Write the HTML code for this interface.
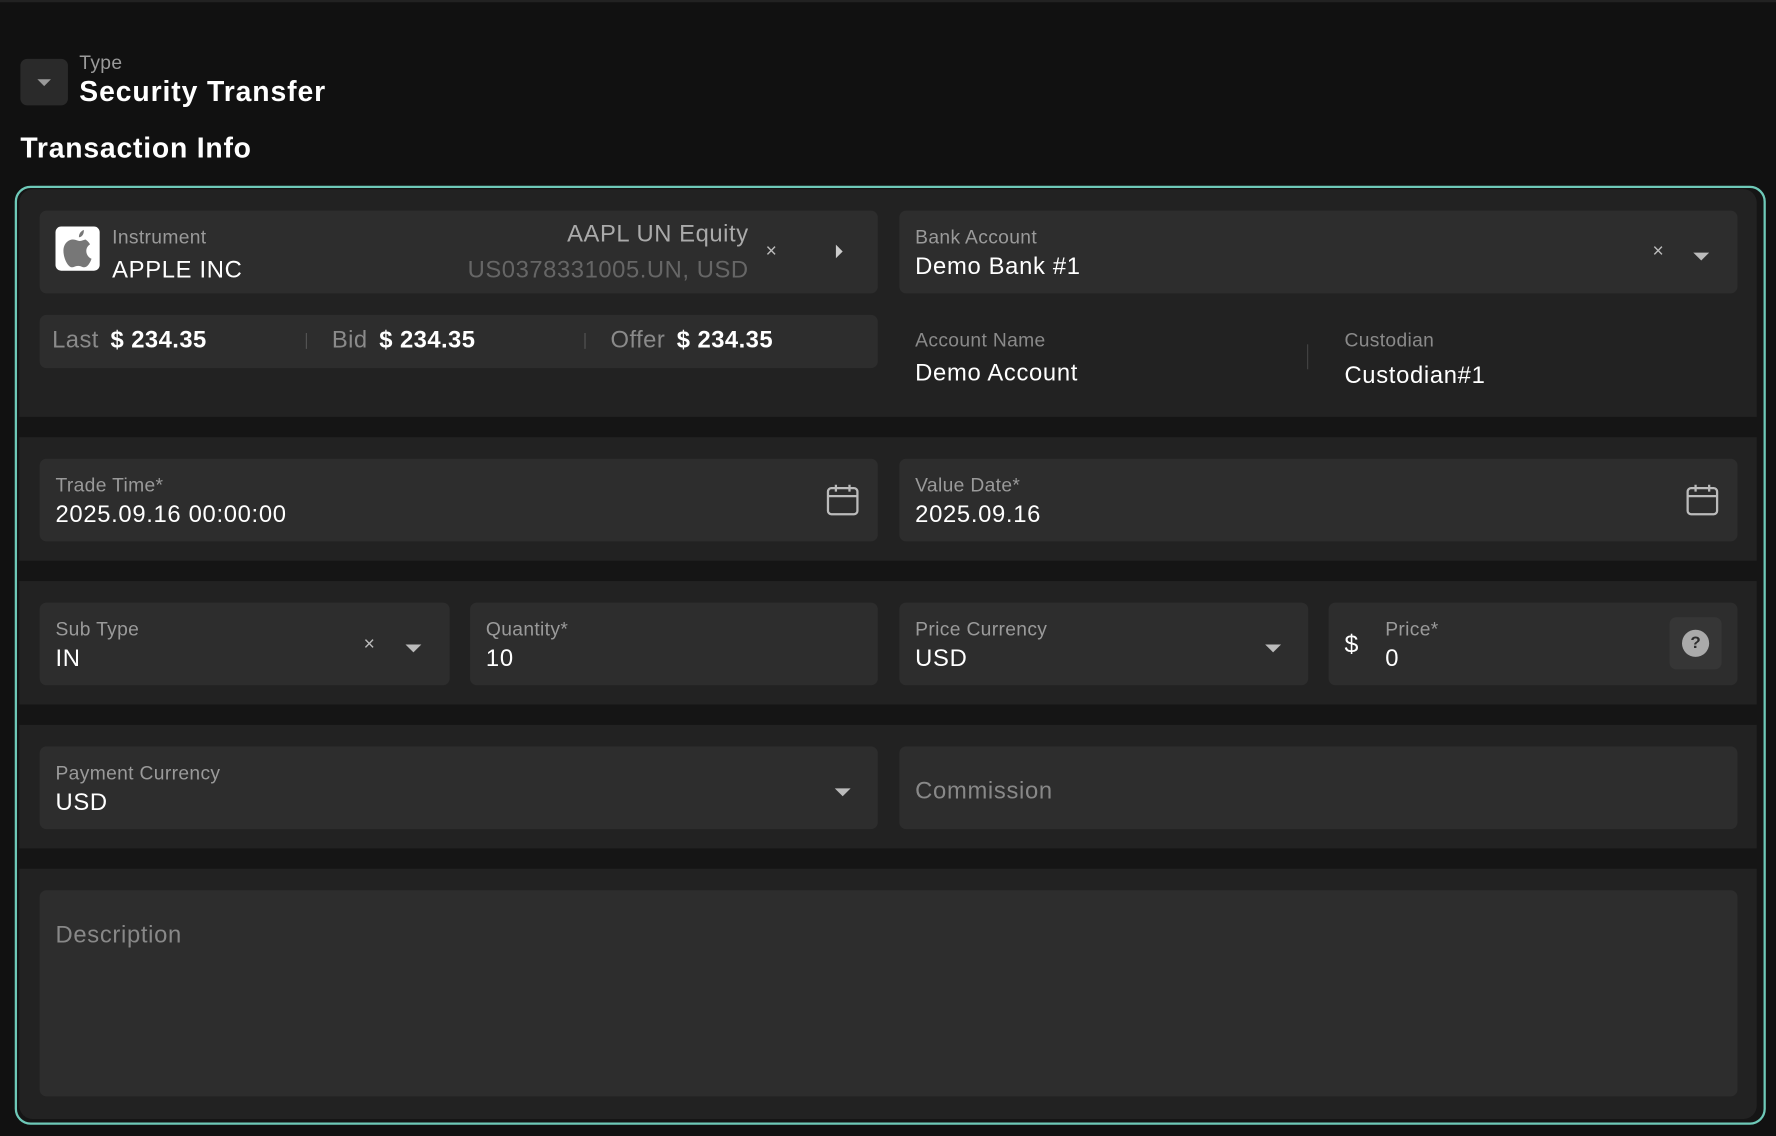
<!DOCTYPE html>
<html><head><meta charset="utf-8"><style>
*{box-sizing:border-box;margin:0;padding:0}
html,body{width:1776px;height:1136px;overflow:hidden;background:#111;font-family:"Liberation Sans",sans-serif;color:#fff}
#w{width:1568px;height:1003px;transform:scale(1.13265);transform-origin:0 0;position:relative;background:#111}
.a{position:absolute}
.lbl{font-size:17px;color:#9a9a9a;letter-spacing:0.3px}
.val{font-size:21px;color:#fff;letter-spacing:0.6px}
.f{position:absolute;background:#2d2d2d;border-radius:6px}
.sec{position:absolute;left:17px;width:1534px;background:#222}
.tri{position:absolute;width:0;height:0;border-left:7px solid transparent;border-right:7px solid transparent;border-top:7px solid #bbb}
.x{position:absolute;color:#bbb;font-size:17px}
</style></head><body><div id="w">
<div class="a" style="left:0;top:0;width:1568px;height:2px;background:#222"></div>
<div class="a" style="left:18px;top:52px;width:42px;height:41px;background:#2a2a2a;border-radius:6px"></div>
<div class="tri" style="left:33px;top:70px;border-left-width:6px;border-right-width:6px;border-top-width:6px;border-top-color:#999"></div>
<div class="a lbl" style="left:70px;top:46px">Type</div>
<div class="a" style="left:70px;top:67px;font-size:25px;font-weight:bold;letter-spacing:0.8px">Security Transfer</div>
<div class="a" style="left:18px;top:117px;font-size:25px;font-weight:bold;letter-spacing:0.7px">Transaction Info</div>

<div class="a" style="left:13px;top:164px;width:1546px;height:829px;border:2px solid #6ec9b8;border-radius:14px;background:#151515;overflow:hidden">
</div>
<div class="sec" style="top:167px;height:201px;border-radius:12px 12px 0 0"></div>
<div class="sec" style="top:386px;height:109px"></div>
<div class="sec" style="top:513px;height:109px"></div>
<div class="sec" style="top:640px;height:109px"></div>
<div class="sec" style="top:767px;height:221px;border-radius:0 0 12px 12px"></div>

<div class="f" style="left:35px;top:186px;width:740px;height:73px"></div>
<div class="a" style="left:49px;top:200px;width:39px;height:39px;background:#fff;border-radius:5px"></div>
<svg class="a" style="left:49px;top:200px" width="39" height="39" viewBox="0 0 39 39"><path d="M25 3c-2.5 1-4.5 3.5-4.3 6.5 2.6-0.1 4.6-2.8 4.3-6.5zM27.5 11.5c-2.5 0-4 1.3-6 1.3S18 11.5 15.5 11.5C11.5 11.5 7 15 7 21.5 7 28 11 36 14.5 36c2 0 2.7-1.3 5.5-1.3s3.3 1.3 5.5 1.3c2.7 0 5.2-4 6.3-7.5-2.8-1.2-4.6-3.8-4.6-7 0-2.7 1.5-4.6 3.3-5.8-1.3-2-3.2-4.2-5-4.2z" fill="#777"/></svg>
<div class="a lbl" style="left:99px;top:200px">Instrument</div>
<div class="a val" style="left:99px;top:227px">APPLE INC</div>
<div class="a" style="right:907px;top:195px;font-size:21px;color:#aaa;letter-spacing:0.5px">AAPL UN Equity</div>
<div class="a" style="right:907px;top:227px;font-size:21px;color:#666;letter-spacing:0.5px">US0378331005.UN, USD</div>
<div class="x" style="left:676px;top:212px">×</div>
<div class="a" style="left:738px;top:216px;width:0;height:0;border-top:6px solid transparent;border-bottom:6px solid transparent;border-left:6px solid #ccc"></div>

<div class="f" style="left:794px;top:186px;width:740px;height:73px"></div>
<div class="a lbl" style="left:808px;top:200px">Bank Account</div>
<div class="a val" style="left:808px;top:224px">Demo Bank #1</div>
<div class="x" style="left:1459px;top:212px">×</div>
<div class="tri" style="left:1495px;top:223px"></div>

<div class="f" style="left:35px;top:278px;width:740px;height:47px"></div>
<div class="a" style="left:46px;top:289px;font-size:21px;color:#8a8a8a;letter-spacing:0.4px">Last <b style="color:#fff;margin-left:4px">$ 234.35</b></div>
<div class="a" style="left:270px;top:294px;width:1px;height:14px;background:#555"></div>
<div class="a" style="left:293px;top:289px;font-size:21px;color:#8a8a8a;letter-spacing:0.4px">Bid <b style="color:#fff;margin-left:4px">$ 234.35</b></div>
<div class="a" style="left:516px;top:294px;width:1px;height:14px;background:#555"></div>
<div class="a" style="left:539px;top:289px;font-size:21px;color:#8a8a8a;letter-spacing:0.4px">Offer <b style="color:#fff;margin-left:4px">$ 234.35</b></div>

<div class="a lbl" style="left:808px;top:291px;color:#8a8a8a">Account Name</div>
<div class="a val" style="left:808px;top:318px">Demo Account</div>
<div class="a" style="left:1154px;top:304px;width:1px;height:22px;background:#444"></div>
<div class="a lbl" style="left:1187px;top:291px;color:#8a8a8a">Custodian</div>
<div class="a val" style="left:1187px;top:320px">Custodian#1</div>

<div class="f" style="left:35px;top:405px;width:740px;height:73px"></div>
<div class="a lbl" style="left:49px;top:419px">Trade Time*</div>
<div class="a val" style="left:49px;top:443px">2025.09.16 00:00:00</div>
<svg class="a" style="left:729px;top:427px" width="30" height="30" viewBox="0 0 30 30" fill="none" stroke="#bbb" stroke-width="2"><rect x="2" y="4" width="26" height="23" rx="3"/><line x1="2" y1="11" x2="28" y2="11"/><line x1="9" y1="1" x2="9" y2="7"/><line x1="21" y1="1" x2="21" y2="7"/></svg>
<div class="f" style="left:794px;top:405px;width:740px;height:73px"></div>
<div class="a lbl" style="left:808px;top:419px">Value Date*</div>
<div class="a val" style="left:808px;top:443px">2025.09.16</div>
<svg class="a" style="left:1488px;top:427px" width="30" height="30" viewBox="0 0 30 30" fill="none" stroke="#bbb" stroke-width="2"><rect x="2" y="4" width="26" height="23" rx="3"/><line x1="2" y1="11" x2="28" y2="11"/><line x1="9" y1="1" x2="9" y2="7"/><line x1="21" y1="1" x2="21" y2="7"/></svg>

<div class="f" style="left:35px;top:532px;width:362px;height:73px"></div>
<div class="a lbl" style="left:49px;top:546px">Sub Type</div>
<div class="a val" style="left:49px;top:570px">IN</div>
<div class="x" style="left:321px;top:559px">×</div>
<div class="tri" style="left:358px;top:569px"></div>
<div class="f" style="left:415px;top:532px;width:360px;height:73px"></div>
<div class="a lbl" style="left:429px;top:546px">Quantity*</div>
<div class="a val" style="left:429px;top:570px">10</div>
<div class="f" style="left:794px;top:532px;width:361px;height:73px"></div>
<div class="a lbl" style="left:808px;top:546px">Price Currency</div>
<div class="a val" style="left:808px;top:570px">USD</div>
<div class="tri" style="left:1117px;top:569px"></div>
<div class="f" style="left:1173px;top:532px;width:361px;height:73px"></div>
<div class="a" style="left:1187px;top:556px;font-size:22px">$</div>
<div class="a lbl" style="left:1223px;top:546px">Price*</div>
<div class="a val" style="left:1223px;top:570px">0</div>
<div class="a" style="left:1474px;top:545px;width:46px;height:46px;background:#363636;border-radius:6px"></div>
<div class="a" style="left:1485px;top:556px;width:24px;height:24px;border-radius:50%;background:#aaa;color:#2d2d2d;font-size:15px;font-weight:bold;text-align:center;line-height:24px">?</div>

<div class="f" style="left:35px;top:659px;width:740px;height:73px"></div>
<div class="a lbl" style="left:49px;top:673px">Payment Currency</div>
<div class="a val" style="left:49px;top:697px">USD</div>
<div class="tri" style="left:737px;top:696px"></div>
<div class="f" style="left:794px;top:659px;width:740px;height:73px"></div>
<div class="a" style="left:808px;top:687px;font-size:21px;color:#888;letter-spacing:0.6px">Commission</div>

<div class="f" style="left:35px;top:786px;width:1499px;height:182px"></div>
<div class="a" style="left:49px;top:814px;font-size:21px;color:#888;letter-spacing:0.6px">Description</div>
</div></body></html>
